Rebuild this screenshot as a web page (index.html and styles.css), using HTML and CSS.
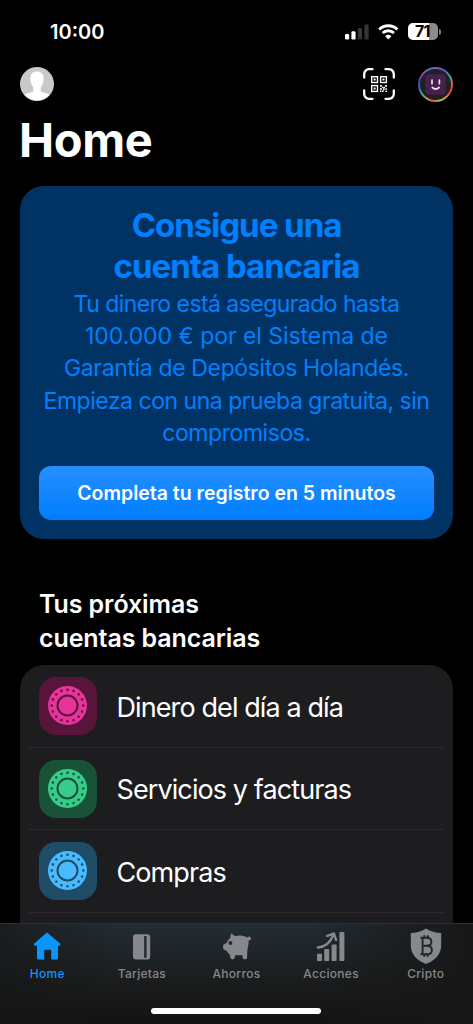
FILE: index.html
```html
<!DOCTYPE html>
<html lang="es">
<head>
<meta charset="utf-8">
<meta name="viewport" content="width=device-width, initial-scale=1">
<title>Home</title>
<link rel="stylesheet" href="styles.css">
</head>
<body>
<svg width="0" height="0" class="defs">
  <defs>
    <symbol id="dial" viewBox="0 0 58 58">
      <circle cx="28.5" cy="28.5" r="19.5" fill="currentColor"/>
      <circle class="dial-ring" cx="28.5" cy="28.5" r="10" fill="none" stroke-width="2"/>
      <circle class="dial-dots" cx="28.5" cy="28.5" r="15.8" fill="none" stroke-width="2.6" stroke-linecap="round" pathLength="160" stroke-dasharray="0.01 9.99"/>
    </symbol>
  </defs>
</svg>
<div class="screen">
  <div class="status">
    <span class="time">10:00</span>
    <div class="indicators">
      <svg width="24" height="16" viewBox="0 0 24 16"><rect x="0" y="10" width="4.2" height="5.5" rx="1.2" fill="#fff"/><rect x="6.4" y="7.3" width="4.2" height="8.2" rx="1.2" fill="#fff"/><rect x="12.8" y="4" width="4.2" height="11.5" rx="1.2" fill="#363636"/><rect x="19.4" y="0.5" width="4.2" height="15" rx="1.2" fill="#363636"/></svg>
      <svg width="21" height="16" viewBox="0 0 21 16" fill="none" stroke="#fff" stroke-width="2.8"><path d="M1.2 5.4a13.2 13.2 0 0 1 18.2 0"/><path d="M4.6 9a8.3 8.3 0 0 1 11.4 0"/><path d="M10.3 15.4 7.2 12.2a4.5 4.5 0 0 1 6.2 0z" fill="#fff" stroke="none"/></svg>
      <div class="battery"><span class="level">71</span><i></i></div>
    </div>
  </div>
  <header class="top">
    <svg width="34" height="34" viewBox="0 0 34 34"><defs><clipPath id="av"><circle cx="17" cy="17" r="16.5"/></clipPath></defs><circle cx="17" cy="17" r="17" fill="#c9c9c9"/><path clip-path="url(#av)" d="M17 4.500c4.600 0 6.800 2.800 6.600 7-.1 1.500.3 1.500-.3 3.500-.3 1.600-.8 2-1.300 3.200-.6 1.400-1.300 2.200-1.300 3.300v2.300c0 1 1.800 1.600 4.300 2.300 2.800.8 5 1.400 6.500 2.900v7H2v-7c1.500-1.500 4.200-2.100 7-2.900 2.500-.7 4.300-1.300 4.300-2.300v-2.300c0-1.100-.7-1.900-1.300-3.300-.5-1.200-1-1.600-1.300-3.200-.6-2-.2-2-.3-3.500-.2-4.200 2-7 6.600-7z" fill="#fff"/></svg>
    <div class="actions">
      <svg width="32" height="32" viewBox="0 0 32 32" fill="none" stroke="#fff"><path d="M1.200 9.500V6a4.800 4.800 0 0 1 4.800-4.800h3.500M22.500 1.200H26A4.800 4.800 0 0 1 30.800 6v3.500M30.800 22.500V26a4.800 4.800 0 0 1-4.800 4.800h-3.500M9.500 30.800H6A4.800 4.800 0 0 1 1.200 26v-3.500" stroke-width="2.300" stroke-linecap="round"/><g stroke-width="1.400"><rect x="8.700" y="8.700" width="5.800" height="5.800"/><rect x="17.600" y="8.700" width="5.800" height="5.800"/><rect x="8.700" y="17.600" width="5.800" height="5.800"/></g><g fill="#fff" stroke="none"><path d="M10.600 10.600h2v2h-2zM19.500 10.600h2v2h-2zM10.600 19.500h2v2h-2zM17 17h1.800v1.800H17zM22.200 17H24v1.800h-1.800zM18.800 18.800h1.600v1.400h-1.600zM20.600 18.800h1.600v1.400h-1.600zM17 20.200h2v1.600h-2zM20 20.600h1.600v1.600H20zM22.400 20.200H24v1.600h-1.600zM17 22.600h1.400V24H17zM19 22.400h1.600V24H19zM22.400 22.600H24V24h-1.600z"/></g></svg>
      <div class="bot"><svg width="31" height="31" viewBox="0 0 31 31"><rect x="5.300" y="5.300" width="20.500" height="20.500" rx="4" fill="#47204e"/><path d="M12 11v3.700M19.400 11v3.700M12.300 18.500q3.400 3 6.800 0" fill="none" stroke="#f3dff5" stroke-width="1.700" stroke-linecap="round"/></svg></div>
    </div>
  </header>
  <h1>Home</h1>
  <section class="promo">
    <h2>Consigue una<br>cuenta bancaria</h2>
    <p><span class="l1">Tu dinero está asegurado hasta</span><br><span class="l2">100.000 € por el Sistema de</span><br><span class="l3">Garantía de Depósitos Holandés.</span><br><span class="l4">Empieza con una prueba gratuita, sin</span><br><span class="l5">compromisos.</span></p>
    <button class="cta">Completa tu registro en 5 minutos</button>
  </section>
  <h3>Tus próximas<br>cuentas bancarias</h3>
  <ul class="accounts">
    <li><svg class="dial pink"><use href="#dial"/></svg><span>Dinero del día a día</span></li>
    <li><svg class="dial green"><use href="#dial"/></svg><span>Servicios y facturas</span></li>
    <li><svg class="dial blue"><use href="#dial"/></svg><span>Compras</span></li>
    <li></li>
  </ul>
  <nav class="tabs">
    <a class="tab active"><svg width="32" height="36" viewBox="0 0 32 36" fill="currentColor"><path d="M15.300 4.900q.7-.6 1.400 0L29 15.600q.8.800.4 1.600-.3.500-1.300.5H27v12.600q0 1.200-1.200 1.200h-5.600v-8.700q0-1-1-1h-5q-1 0-1 1v8.700H7.200Q6 31.500 6 30.300V17.700H4.200q-1 0-1.300-.6-.3-.8.400-1.500z"/></svg><span>Home</span></a>
    <a class="tab"><svg width="32" height="36" viewBox="0 0 32 36" fill="currentColor"><path fill-rule="evenodd" d="M9.700 6.300h11.800a2.700 2.700 0 0 1 2.700 2.700v19.800a2.700 2.700 0 0 1-2.700 2.700H9.700A2.700 2.700 0 0 1 7 28.800V9a2.700 2.700 0 0 1 2.700-2.700zM18.200 8v21.800h2.300V8z"/></svg><span>Tarjetas</span></a>
    <a class="tab"><svg width="32" height="36" viewBox="0 0 32 36"><path fill="currentColor" d="M11 5.600c.7-.6 1.800.8 2.700 1.900 1.600.5 2.500.6 4 .3 3.500-.8 8-.2 9.900 2.500 1.500 2.200 1.100 5.700.5 8.200l-.7 3.400-.3 7.700q-.1 1.700-1.600 1.700h-1.200q-1.400 0-1.600-1.700l-.4-2.700q-3.500.6-7 .2l-.5 2.500q-.3 1.700-1.800 1.700h-.7q-1.300 0-1.700-1.600l-1-3.500q-1.400-.8-2.600-3l-2.700-1.500q-1.200-.6-1.200-1.800v-2.200q0-1.200 1.200-1.700l2.300-1.100c.8-2 1.900-3.500 3.600-4.700z"/><circle cx="10.400" cy="15" r="1.900" fill="#202b33"/><circle cx="29" cy="10.500" r="2" fill="currentColor"/></svg><span>Ahorros</span></a>
    <a class="tab"><svg width="32" height="36" viewBox="0 0 32 36" fill="currentColor"><rect x="2" y="25.800" width="5" height="7.200" rx=".8"/><rect x="9.200" y="21" width="5" height="12" rx=".8"/><rect x="16.600" y="16.500" width="5" height="16.500" rx=".8"/><rect x="24.400" y="4" width="5" height="29" rx=".8"/><path d="M2.800 19.500C10 19.200 15.500 14.200 18.400 6.800M12.200 7.800l6.700-2.300 2.200 6.300" fill="none" stroke="currentColor" stroke-width="2.400" stroke-linecap="round"/></svg><span>Acciones</span></a>
    <a class="tab"><svg width="32" height="36" viewBox="0 0 32 36"><path fill="currentColor" d="M16 .6C20.500 3.700 25.500 5 31.200 5v12.500C31.200 26 25.500 32.200 16 36 6.500 32.200.8 26 .8 17.500V5C6.500 5 11.500 3.700 16 .6z"/><path d="M10.400 9.700h6.200c3.200 0 4.800 1.500 4.800 4s-1.600 4-4.800 4h-4 4.300c3.200 0 5 1.600 5 4.300s-1.800 4.300-5 4.300h-6.500M12.600 9.700v16.600M14.300 7.300V10M17.800 7.300V10M14.300 26v2.700M17.800 26v2.700" fill="none" stroke="#242525" stroke-width="1.900"/></svg><span>Cripto</span></a>
    <div class="home-bar"></div>
  </nav>
</div>
</body>
</html>
```
FILE: styles.css
```css
* { box-sizing: border-box; }
body { margin: 0; background: #000; font-family: Inter, "Liberation Sans", sans-serif; color: #fff; }
h1, h2, h3, p, ul { margin: 0; padding: 0; }
svg { display: block; flex: none; }
.defs { position: absolute; }
.screen { height: 1024px; overflow: hidden; display: flex; flex-direction: column; }
.status { height: 62px; flex: none; display: flex; justify-content: space-between; padding: 1px 32px 0 50px; align-items: center; }
.time { font-size: 20px; font-weight: 600; letter-spacing: 0; }
.indicators { display: flex; gap: 9px; align-items: center; }
.battery { display: flex; align-items: center; gap: 1px; }
.battery .level { width: 30px; height: 17px; border-radius: 5px; background: linear-gradient(90deg, #fff 71%, #8c8c8c 71%); color: #000; font-size: 16px; font-weight: 700; line-height: 17px; padding-left: 7px; letter-spacing: -.8px; }
.battery i { width: 2px; height: 6px; border-radius: 0 2px 2px 0; background: #777; }
.top { height: 44px; flex: none; display: flex; justify-content: space-between; align-items: center; padding: 0 20px; }
.actions { display: flex; align-items: center; gap: 23px; }
.bot { width: 35px; height: 35px; border-radius: 50%; padding: 2px; background: conic-gradient(#914dcc, #4b5bc8 30deg, #32b7a2 65deg, #ef503b 90deg, #e83e45 120deg, #f0a43b 145deg, #9bc44c 165deg, #e4514e 190deg, #e69442 210deg, #42b887 230deg, #376fc6 255deg, #47409d 280deg, #a643b3 315deg, #327ac4 340deg, #914dcc); }
.bot svg { border-radius: 50%; background: #202022; }
h1 { font-size: 47px; line-height: 58px; font-weight: 700; margin: 5px 0 17px 19px; letter-spacing: -.4px; }
.promo { margin: 0 20px; width: 433px; height: 353px; flex: none; border-radius: 24px; background: #003364; color: #0080ff; text-align: center; padding: 18.5px 19px; }
h2 { font-size: 33px; line-height: 41.5px; font-weight: 700; letter-spacing: -1px; }
.promo p { font-size: 23px; line-height: 32.4px; white-space: nowrap; font-weight: 400; }
.l1 { letter-spacing: -.55px; }
.l2 { letter-spacing: -.05px; }
.l3 { letter-spacing: -.36px; }
.l4 { letter-spacing: -.48px; }
.l5 { letter-spacing: -.42px; }
.cta { display: block; width: 395px; height: 54px; margin-top: 16px; border: 0; border-radius: 12px; background: linear-gradient(#268fff, #007eff); color: #fff; font: 600 19.5px Inter, sans-serif; }
h3 { font-size: 25px; line-height: 34px; font-weight: 600; margin: 48px 39px 10px; letter-spacing: -.1px; }
.accounts { list-style: none; flex: none; margin: 0 20px; width: 433px; height: 258px; overflow: hidden; border-radius: 24px 24px 0 0; background: #1d1d1f; }
.accounts li { height: 82.5px; margin: 0 9px; padding: 1px 10px 0; display: flex; gap: 19.5px; align-items: center; border-bottom: 1px solid #2b2b2d; font-size: 27px; letter-spacing: -.9px; }
.accounts span { padding-top: 2px; }
.dial { width: 58px; height: 58px; border-radius: 17px; }
.dial-ring, .dial-dots { stroke: var(--tile); }
.pink { --tile: #58143a; background: #58143a; color: #e7339a; }
.green { --tile: #185338; background: #185338; color: #36cd8c; }
.blue { --tile: #1f4c66; background: #1f4c66; color: #48bbff; }
.tabs { height: 101px; flex: none; display: grid; grid-template-columns: repeat(5, 1fr); grid-template-rows: 80px 6px; padding-top: 4px; background: linear-gradient(90deg, #151617aa 0, transparent 25%, transparent 65%, #171717 100%), linear-gradient(#222d35, #1c1e1f 50%, #131313); border-top: 1px solid #292e31; }
.tab { display: flex; flex-direction: column; align-items: center; color: #85888c; font-size: 12px; font-weight: 500; letter-spacing: .3px; }
.tab span { line-height: 16px; margin-top: 2px; }
.tab.active { color: #0a95ff; }
.home-bar { grid-column: 1 / -1; justify-self: center; width: 170px; height: 6px; border-radius: 3px; background: #fff; }
```
